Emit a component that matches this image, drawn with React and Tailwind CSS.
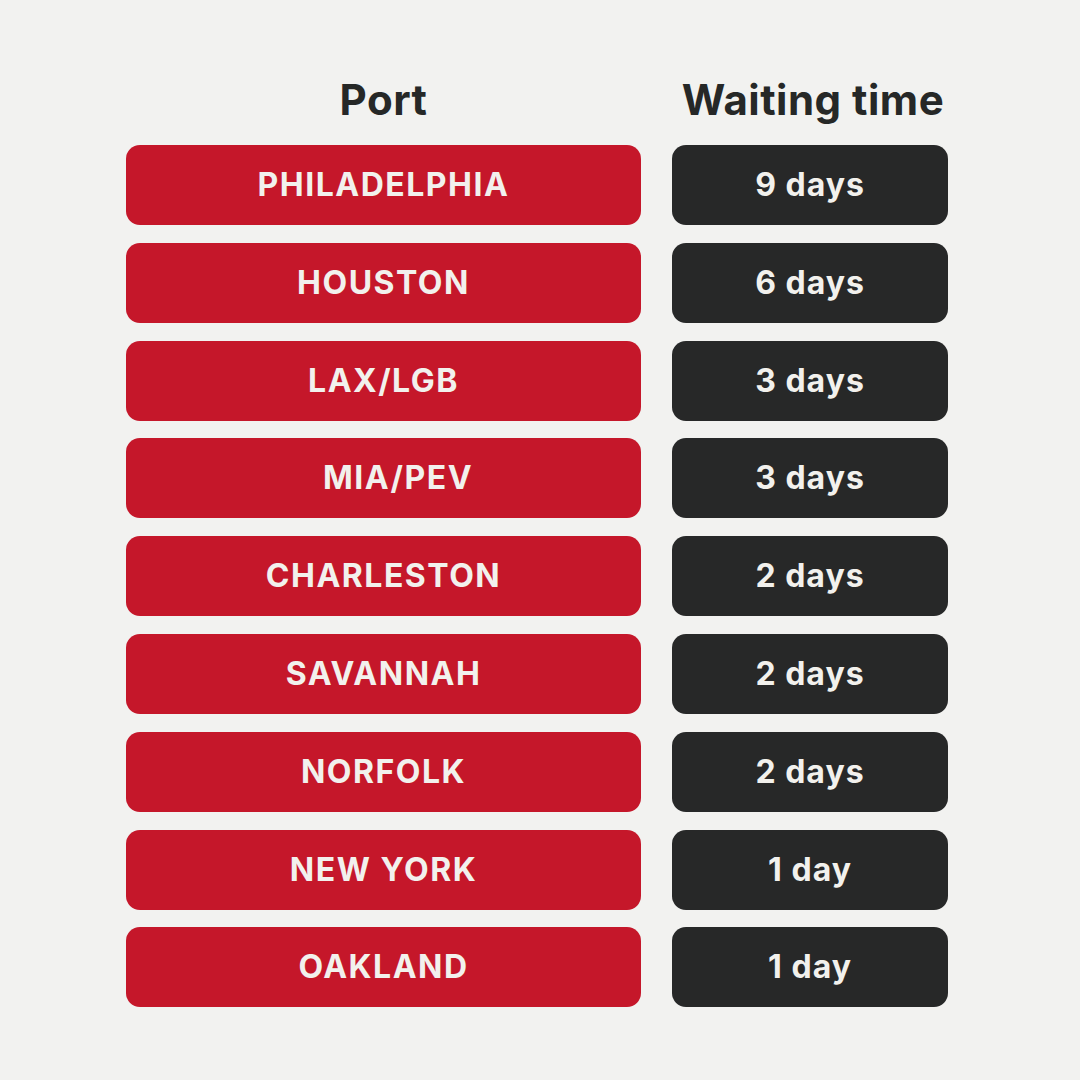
const rows = [
  { port: 'PHILADELPHIA', wait: '9 days' },
  { port: 'HOUSTON', wait: '6 days' },
  { port: 'LAX/LGB', wait: '3 days' },
  { port: 'MIA/PEV', wait: '3 days', shift: true },
  { port: 'CHARLESTON', wait: '2 days' },
  { port: 'SAVANNAH', wait: '2 days' },
  { port: 'NORFOLK', wait: '2 days' },
  { port: 'NEW YORK', wait: '1 day' },
  { port: 'OAKLAND', wait: '1 day' },
]

function App() {
  return (
    <div className="flex h-[1080px] w-[1080px] bg-[#f2f2f0] pl-[126px] pt-[72px] font-['Inter',sans-serif]">
      <div className="flex flex-col">
        <div className="mb-[17px] grid h-[56px] grid-cols-[515px_276px] gap-x-[31px] text-[42px] font-bold leading-[56px] text-[#262827]">
          <div className="text-center tracking-[0.5px]">Port</div>
          <div className="pl-[6px] text-center tracking-[0.5px]">Waiting time</div>
        </div>

        <div className="flex flex-col gap-[17.8px]">
          {rows.map((row) => (
            <div key={row.port} className="grid h-[80px] grid-cols-[515px_276px] gap-x-[31px]">
              <div className="flex items-center justify-center rounded-[14px] bg-[#c5172a] text-[32px] font-bold tracking-[1.5px] text-[#f2f1ed]">
                <span className={row.shift ? 'pl-[29px]' : ''}>{row.port}</span>
              </div>
              <div className="flex items-center justify-center rounded-[14px] bg-[#272828] text-[32px] font-bold tracking-[1px] text-[#f2f1ed]">
                {row.wait}
              </div>
            </div>
          ))}
        </div>
      </div>
    </div>
  )
}

export default App
